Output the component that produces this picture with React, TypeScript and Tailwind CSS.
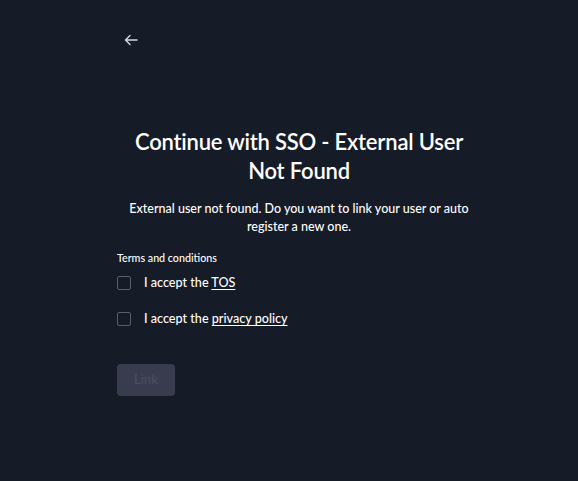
export default function App() {
  return (
    <div className="min-h-[481px] w-full bg-[#161b28] font-['Lato','Liberation_Sans',sans-serif] text-white">
      <div className="ml-[117px] w-[364px] pt-[30px]">
        <button className="ml-[4px] flex h-5 w-5 items-center justify-center text-[#d6d8de]">
          <svg width="16" height="16" viewBox="0 0 16 16" fill="none" stroke="currentColor" strokeWidth="1.4" strokeLinecap="round" strokeLinejoin="round">
            <path d="M14 8H2.5M7 3.5L2.5 8L7 12.5" />
          </svg>
        </button>

        <h1 className="mt-[77px] text-center text-[22px] font-semibold leading-[29px] tracking-[-0.2px]">
          Continue with SSO - External User Not Found
        </h1>
        <p className="mt-[15px] text-center text-[12.5px] font-medium leading-[18px]">
          External user not found. Do you want to link your user or auto register a new one.
        </p>

        <div className="mt-[15px] text-[10.7px] font-medium leading-[14px]">Terms and conditions</div>

        <div className="mt-[11px] flex flex-col gap-[22px]">
          <label className="flex items-center gap-[13px] text-[12.6px] font-medium leading-[14px]">
            <span className="h-[14px] w-[14px] rounded-[2px] border border-[#5a5e6c]" />
            <span>
              I accept the <span className="underline underline-offset-2">TOS</span>
            </span>
          </label>
          <label className="flex items-center gap-[13px] text-[12.6px] font-medium leading-[14px]">
            <span className="h-[14px] w-[14px] rounded-[2px] border border-[#5a5e6c]" />
            <span>
              I accept the <span className="underline underline-offset-2">privacy policy</span>
            </span>
          </label>
        </div>

        <button className="mt-[38px] h-[32px] w-[58px] rounded-[4px] bg-[#393c4e] text-[13px] font-medium text-[#4a4d5e]">
          Link
        </button>
      </div>
    </div>
  );
}
